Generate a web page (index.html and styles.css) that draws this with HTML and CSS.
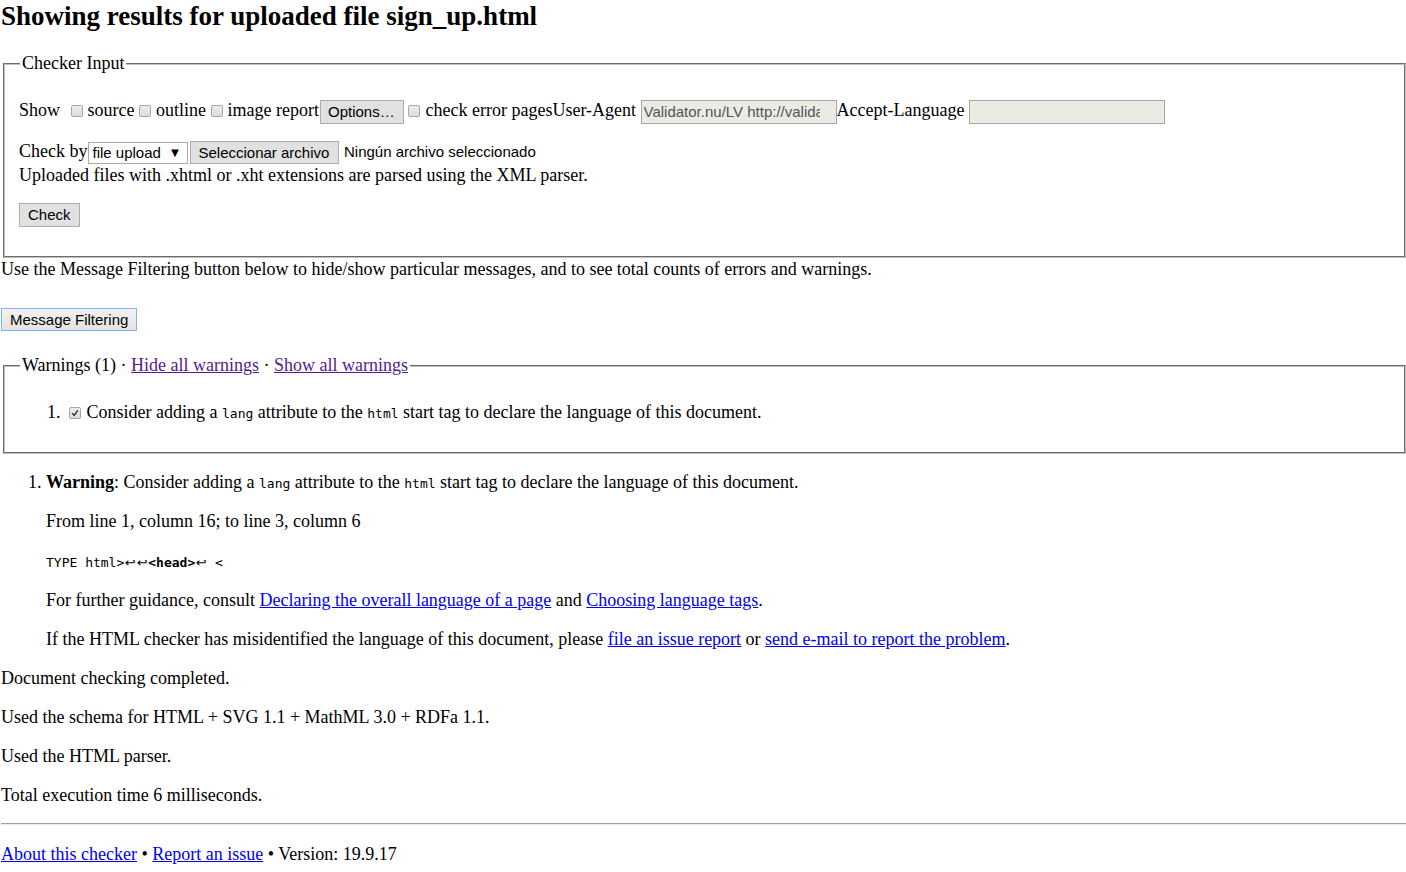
FILE: index.html
```html
<!DOCTYPE html>
<html lang="en">
<head>
<meta charset="utf-8">
<title>Showing results for uploaded file sign_up.html - Nu Html Checker</title>
<link rel="stylesheet" href="styles.css">
</head>
<body>
<h1 class="title">Showing results for uploaded file sign_up.html</h1>
<form class="checker-form">
  <fieldset class="fs fs-input">
    <legend class="fs-legend">Checker Input</legend>
    <p class="row row-options"><span class="show-label">Show</span> <span class="cb"></span> source <span class="cb"></span> outline <span class="cb"></span> image report<span class="btn btn-options">Options…</span> <span class="cb"></span> check error pages<span>User-Agent</span> <span class="txt"><span class="txt-value">Validator.nu/LV http://valida</span></span><span class="after-txt">Accept-Language</span> <span class="txt txt-empty"></span></p>
    <p class="row row-check">Check by<span class="select">file upload<span class="select-arrow">▼</span></span><span class="btn btn-file">Seleccionar archivo</span> <span class="file-status">Ningún archivo seleccionado</span><br>Uploaded files with .xhtml or .xht extensions are parsed using the XML parser.</p>
    <p class="row row-submit"><span class="btn btn-check">Check</span></p>
  </fieldset>
</form>
<p class="filter-note">Use the Message Filtering button below to hide/show particular messages, and to see total counts of errors and warnings.</p>
<p class="filter-row"><span class="btn btn-filter">Message Filtering</span></p>
<fieldset class="fs fs-warnings">
  <legend class="fs-legend">Warnings (1) · <a class="visited" href="#">Hide all warnings</a> · <a class="visited" href="#">Show all warnings</a></legend>
  <ol class="filter-list">
    <li><span class="cb cb-checked"><svg viewBox="0 0 10 10" width="10" height="10"><path d="M2.2 5.2 L4.2 7.4 L7.8 2.4" fill="none" stroke="#333" stroke-width="1.5"/></svg></span> Consider adding a <code>lang</code> attribute to the <code>html</code> start tag to declare the language of this document.</li>
  </ol>
</fieldset>
<ol class="messages">
  <li class="msg">
    <p class="msg-line"><strong>Warning</strong>: Consider adding a <code>lang</code> attribute to the <code>html</code> start tag to declare the language of this document.</p>
    <p class="msg-line">From line 1, column 16; to line 3, column 6</p>
    <p class="msg-line extract"><code>TYPE html&gt;<span class="nl">↩</span><span class="nl">↩</span><b>&lt;head&gt;</b><span class="nl">↩</span> &lt;</code></p>
    <p class="msg-line">For further guidance, consult <a href="#">Declaring the overall language of a page</a> and <a href="#">Choosing language tags</a>.</p>
    <p class="msg-line">If the HTML checker has misidentified the language of this document, please <a href="#">file an issue report</a> or <a href="#">send e-mail to report the problem</a>.</p>
  </li>
</ol>
<p class="stat">Document checking completed.</p>
<p class="stat">Used the schema for HTML + SVG 1.1 + MathML 3.0 + RDFa 1.1.</p>
<p class="stat">Used the HTML parser.</p>
<p class="stat">Total execution time 6 milliseconds.</p>
<hr class="rule">
<p class="footer"><a href="#">About this checker</a> • <a href="#">Report an issue</a> • Version: 19.9.17</p>
</body>
</html>
```
FILE: styles.css
```css
html { background: #fff; }
body {
  margin: 0;
  padding: 0 0 0 1px;
  font-family: "Liberation Serif", "Times New Roman", serif;
  font-size: 18px;
  line-height: 23px;
  color: #000;
}
a { color: #0000ee; }
a.visited { color: #551a8b; }
code {
  font-family: "DejaVu Sans Mono", "Liberation Mono", monospace;
  font-size: 13px;
  line-height: 13px;
}
.title {
  font-size: 27px;
  line-height: 32px;
  font-weight: bold;
  margin: 0 0 20px;
}
.checker-form { margin: 0; }
.fs {
  margin: 0 0 0 2px;
  padding: 0 12px 13px 14px;
  border: 2px groove #c0c0c0;
  min-width: 0;
}
.fs-warnings { padding-bottom: 12px; }
.fs-legend {
  padding: 0 2px;
  margin-left: 1px;
  line-height: 23px;
}
.row { margin: 16px 0; }
.row-options {
  margin-top: 22px;
  line-height: 26px;
  white-space: nowrap;
}
.show-label { margin-right: 6px; }
.row-check { margin: 16px 0 14px; }
.row-submit { line-height: 25px; margin: 14px 0 16px; }
.cb {
  display: inline-block;
  box-sizing: border-box;
  width: 12px;
  height: 12px;
  border: 1px solid #a6a6a6;
  border-radius: 2px;
  background: linear-gradient(#ededed, #dcdcdc);
  vertical-align: -1px;
  margin: 0 0.5px 0 0;
}
.cb svg { display: block; }
.btn {
  display: inline-block;
  box-sizing: border-box;
  font-family: "Liberation Sans", Arial, sans-serif;
  font-size: 15px;
  line-height: 20px;
  height: 24px;
  padding: 1px 7px;
  border: 1px solid #adadad;
  background: #e1e1e1;
  color: #000;
  vertical-align: middle;
  white-space: nowrap;
}
.btn-options { width: 84px; margin-left: 1px; }
.btn-file { height: 23px; line-height: 19px; margin-left: 2px; width: 149px; }
.btn-check { width: 61px; padding-left: 8px; }
.txt {
  display: inline-block;
  box-sizing: border-box;
  width: 196px;
  height: 24px;
  border: 1px solid #a9a9a9;
  background: #ebebe4;
  font-family: "Liberation Sans", Arial, sans-serif;
  font-size: 15px;
  line-height: 22px;
  color: #545454;
  padding: 0 2px;
  vertical-align: middle;
}
.txt-value {
  display: block;
  width: 176px;
  overflow: hidden;
  white-space: nowrap;
}
.select {
  display: inline-block;
  box-sizing: border-box;
  width: 100px;
  height: 22px;
  border: 1px solid #a9a9a9;
  background: #fff;
  font-family: "Liberation Sans", Arial, sans-serif;
  font-size: 15px;
  line-height: 20px;
  padding: 0 3px;
  vertical-align: middle;
  position: relative;
  margin-left: 1px;
}
.select-arrow {
  position: absolute;
  right: 6px;
  top: 0;
  font-size: 13px;
}
.file-status {
  font-family: "Liberation Sans", Arial, sans-serif;
  font-size: 15px;
}
.filter-note { margin: 0; }
.filter-row { margin: 27px 0 23px; line-height: 23px; height: 23px; }
.btn-filter {
  border-color: #7eb4ea;
  background: linear-gradient(#f2f2f2, #e3e3e3);
  width: 136px;
  height: 23px;
  line-height: 19px;
  padding: 1px 8px;
  vertical-align: top;
}
.filter-list {
  margin: 24px 0 16px;
  padding-left: 46px;
}
.filter-list .cb { margin: 0 1px 0 4px; }
.messages {
  margin: 17px 0 16px;
  padding-left: 45px;
}
.msg-line { margin: 16px 0; }
.extract { margin: 17px 0 15px; }
.extract b { font-weight: bold; }
.nl {
  display: inline-block;
  width: 12px;
  text-align: center;
  font-family: "DejaVu Sans", sans-serif;
  font-size: 13px;
}
.stat { margin: 16px 0; }
.rule {
  margin: 16px 0;
  border: none;
  border-top: 1px solid #a0a0a0;
  border-bottom: 1px solid #ececec;
  height: 0;
}
.footer { margin: 18px 0 16px; }
```
